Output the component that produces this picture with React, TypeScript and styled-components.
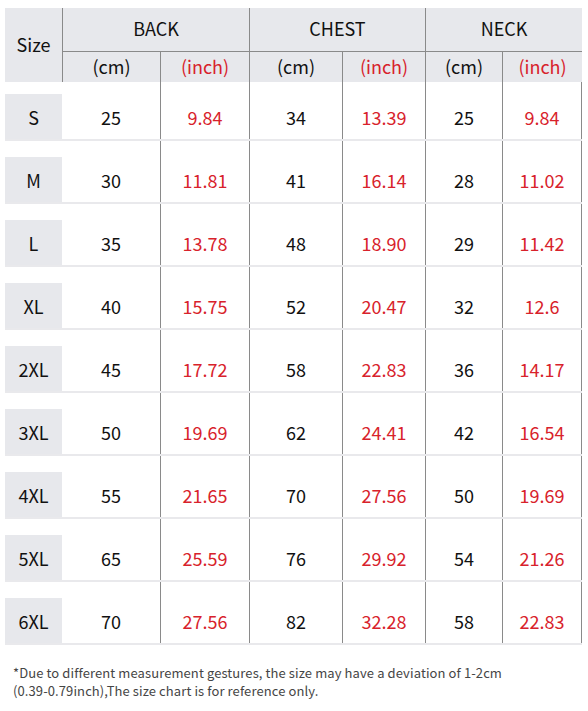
import React from "react";
import styled, { createGlobalStyle } from "styled-components";

const Global = createGlobalStyle`
  html, body { margin: 0; padding: 0; background: #ffffff; }
  body { font-family: "Noto Sans CJK SC", "Noto Sans", sans-serif; }
`;

const COLS = "57px 98px 89px 93px 83px 77px 80px";
const LINE = "#8a8a8a";
const GRAY = "#e7e8ec";
const RED = "#d8222b";

const Page = styled.div`
  width: 588px;
  height: 711px;
  padding: 8px 6px 0 5px;
  box-sizing: border-box;
  overflow: hidden;
`;

const Table = styled.div`
  width: 577px;
`;

const Header = styled.div`
  display: grid;
  grid-template-columns: ${COLS};
  grid-template-rows: 43px 31px;
  background: ${GRAY};
`;

const HeadCell = styled.div<{ $col: string; $row: string; $left?: boolean; $top?: boolean; $red?: boolean }>`
  grid-column: ${(p) => p.$col};
  grid-row: ${(p) => p.$row};
  display: flex;
  align-items: center;
  justify-content: center;
  font-size: 18px;
  color: ${(p) => (p.$red ? RED : "#111")};
  border-left: ${(p) => (p.$left ? `1px solid ${LINE}` : "none")};
  border-top: ${(p) => (p.$top ? `1px solid ${LINE}` : "none")};
  line-height: 1;
  padding-bottom: 3px;
`;

const Row = styled.div<{ $first?: boolean }>`
  display: grid;
  grid-template-columns: ${COLS};
  box-sizing: border-box;
  height: ${(p) => (p.$first ? 59 : 63)}px;
  border-bottom: 2px solid #e9e9ec;
`;

const SizeCell = styled.div`
  align-self: end;
  height: 45px;
  background: ${GRAY};
  display: flex;
  align-items: center;
  justify-content: center;
  font-size: 18px;
  color: #111;
  box-sizing: border-box;
`;

const DataCell = styled.div<{ $red?: boolean; $line?: boolean; $last?: boolean }>`
  display: flex;
  align-items: flex-end;
  justify-content: center;
  padding-bottom: 13px;
  box-sizing: border-box;
  font-size: 18px;
  line-height: 1;
  color: ${(p) => (p.$red ? RED : "#111")};
  border-left: ${(p) => (p.$line ? `1px solid ${LINE}` : "none")};
  border-right: ${(p) => (p.$last ? `1px solid ${LINE}` : "none")};
`;

const Note = styled.p`
  margin: 19px 0 0 8px;
  font-size: 13px;
  line-height: 18px;
  color: #454545;
  letter-spacing: 0.1px;
`;

const rows: [string, string, string, string, string, string, string][] = [
  ["S", "25", "9.84", "34", "13.39", "25", "9.84"],
  ["M", "30", "11.81", "41", "16.14", "28", "11.02"],
  ["L", "35", "13.78", "48", "18.90", "29", "11.42"],
  ["XL", "40", "15.75", "52", "20.47", "32", "12.6"],
  ["2XL", "45", "17.72", "58", "22.83", "36", "14.17"],
  ["3XL", "50", "19.69", "62", "24.41", "42", "16.54"],
  ["4XL", "55", "21.65", "70", "27.56", "50", "19.69"],
  ["5XL", "65", "25.59", "76", "29.92", "54", "21.26"],
  ["6XL", "70", "27.56", "82", "32.28", "58", "22.83"],
];

export default function App() {
  return (
    <Page>
      <Global />
      <Table>
        <Header>
          <HeadCell $col="1" $row="1 / 3">Size</HeadCell>
          <HeadCell $col="2 / 4" $row="1" $left>BACK</HeadCell>
          <HeadCell $col="4 / 6" $row="1" $left>CHEST</HeadCell>
          <HeadCell $col="6 / 8" $row="1" $left>NECK</HeadCell>
          <HeadCell $col="2" $row="2" $left $top>(cm)</HeadCell>
          <HeadCell $col="3" $row="2" $left $top $red>(inch)</HeadCell>
          <HeadCell $col="4" $row="2" $left $top>(cm)</HeadCell>
          <HeadCell $col="5" $row="2" $left $top $red>(inch)</HeadCell>
          <HeadCell $col="6" $row="2" $left $top>(cm)</HeadCell>
          <HeadCell $col="7" $row="2" $left $top $red>(inch)</HeadCell>
        </Header>
        {rows.map((r, i) => (
          <Row key={r[0]} $first={i === 0}>
            <SizeCell>{r[0]}</SizeCell>
            <DataCell>{r[1]}</DataCell>
            <DataCell $red $line>{r[2]}</DataCell>
            <DataCell $line>{r[3]}</DataCell>
            <DataCell $red $line>{r[4]}</DataCell>
            <DataCell $line>{r[5]}</DataCell>
            <DataCell $red $line $last>{r[6]}</DataCell>
          </Row>
        ))}
      </Table>
      <Note>
        *Due to different measurement gestures, the size may have a deviation of 1-2cm
        <br />
        (0.39-0.79inch),The size chart is for reference only.
      </Note>
    </Page>
  );
}
